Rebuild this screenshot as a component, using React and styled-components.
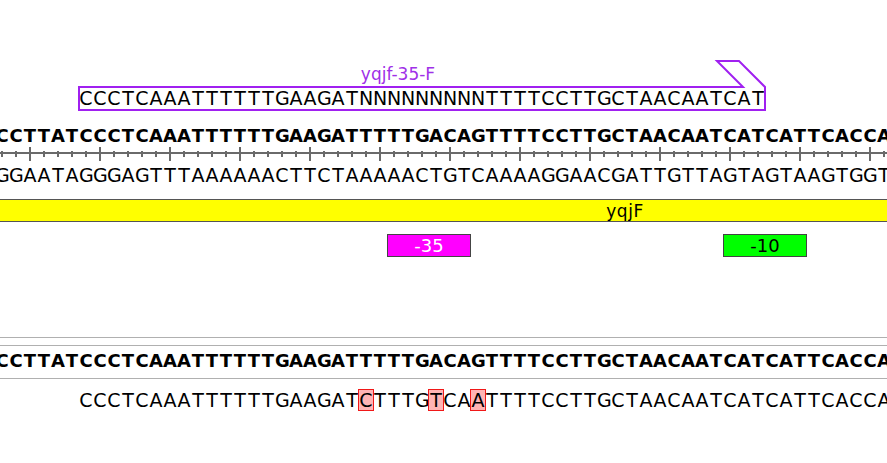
import React from 'react';
import styled, { createGlobalStyle, css } from 'styled-components';

// =============================================
// DATA
// =============================================
const CELL = 14;
const TOP = 'CCTTATCCCTCAAATTTTTTGAAGATTTTTGACAGTTTTCCTTGCTAACAATCATCATTCACCA';
const PAIR = { A: 'T', T: 'A', G: 'C', C: 'G', N: 'N' };
const BOTTOM = TOP.split('').map((b) => PAIR[b]).join('');

const PRIMER = {
  name: 'yqjf-35-F',
  start: 6,
  seq: 'CCCTCAAATTTTTTGAAGATNNNNNNNNNTTTTCCTTGCTAACAATCAT',
};

const FEATURE = { name: 'yqjF', start: 40, len: 10 };

const PROMOTERS = [
  { name: '-35', start: 28, len: 6, bg: '#ff00ff', fg: '#ffffff' },
  { name: '-10', start: 52, len: 6, bg: '#00ff00', fg: '#000000' },
];

const READ = {
  start: 6,
  seq: 'CCCTCAAATTTTTTGAAGATCTTTGTCAATTTTCCTTGCTAACAATCATCATTCACCA',
};

// =============================================
// PARTS
// =============================================
const Bases = ({ seq, refSeq, refStart = 0 }) =>
  seq.split('').map((b, i) => (
    <Base key={i} $mismatch={refSeq && refSeq[refStart + i] !== b}>
      {b}
    </Base>
  ));

const PrimerOutline = () => (
  <Outline width="686" height="25">
    <path
      d="M0 1 H664 L638 -25 H660 L686 1 V24 H0 Z"
      fill="none"
      stroke="#a020f0"
      strokeWidth="2"
      strokeLinejoin="miter"
    />
  </Outline>
);

const App = () => {
  return (
    <>
      <GlobalStyle />
      <Viewer>
        <Canvas>
          <LabelTrack>
            <PrimerName $start={PRIMER.start}>{PRIMER.name}</PrimerName>
          </LabelTrack>

          <LabelTrack $primer>
            <Primer $start={PRIMER.start} $len={PRIMER.seq.length}>
              <PrimerOutline />
              <Bases seq={PRIMER.seq} />
            </Primer>
          </LabelTrack>

          <StrandRow $bold $mt={15}>
            <Bases seq={TOP} />
          </StrandRow>
          <Ruler />
          <StrandRow $mt={4} $h={19}>
            <Bases seq={BOTTOM} />
          </StrandRow>

          <FeatureBar>
            <FeatureName $start={FEATURE.start} $len={FEATURE.len}>
              {FEATURE.name}
            </FeatureName>
          </FeatureBar>

          <PromoterTrack>
            {PROMOTERS.map((p) => (
              <Promoter key={p.name} {...{ $start: p.start, $len: p.len, $bg: p.bg, $fg: p.fg }}>
                {p.name}
              </Promoter>
            ))}
          </PromoterTrack>

          <Divider $mt={80} />
          <Divider $mt={7} />
          <StrandRow $bold $mt={5}>
            <Bases seq={TOP} />
          </StrandRow>
          <Divider $mt={7} />
          <StrandRow $mt={11} $offset={READ.start}>
            <Bases seq={READ.seq} refSeq={TOP} refStart={READ.start} />
          </StrandRow>
        </Canvas>
      </Viewer>
    </>
  );
};

export default App;

// =============================================
// STYLES
// =============================================
const GlobalStyle = createGlobalStyle`
  html, body {
    margin: 0;
    padding: 0;
    background: #ffffff;
    overflow: hidden;
  }
  * {
    box-sizing: border-box;
  }
`;

const Viewer = styled.div`
  width: 887px;
  height: 463px;
  overflow: hidden;
  background: #ffffff;
  font-family: 'DejaVu Sans', Verdana, sans-serif;
  color: #000000;
`;

const Canvas = styled.div`
  margin-left: -5px;
  width: ${64 * CELL}px;
  padding-top: 64px;
`;

const LabelTrack = styled.div`
  display: grid;
  grid-template-columns: repeat(64, ${CELL}px);
  height: ${(p) => (p.$primer ? 25 : 21)}px;
  margin-top: ${(p) => (p.$primer ? 1 : 0)}px;
`;

const PrimerName = styled.div`
  grid-column: ${(p) => p.$start + 1} / span 46;
  padding-right: 6px;
  text-align: center;
  font-size: 17px;
  line-height: 21px;
  color: #a030e8;
  white-space: nowrap;
`;

const Primer = styled.div`
  grid-column: ${(p) => p.$start + 1} / span ${(p) => p.$len};
  position: relative;
  display: flex;
  font-size: 19px;
  line-height: 25px;
`;

const Outline = styled.svg`
  position: absolute;
  left: 0;
  top: 0;
  overflow: visible;
  pointer-events: none;
`;

const StrandRow = styled.div`
  display: flex;
  height: ${(p) => p.$h || 20}px;
  line-height: ${(p) => p.$h || 20}px;
  margin-top: ${(p) => p.$mt || 0}px;
  padding-left: ${(p) => (p.$offset || 0) * CELL}px;
  font-size: ${(p) => (p.$bold ? 18 : 19)}px;
  font-weight: ${(p) => (p.$bold ? 700 : 400)};
  white-space: nowrap;
`;

const Base = styled.span`
  flex: none;
  width: ${CELL}px;
  text-align: center;
  ${(p) =>
    p.$mismatch &&
    css`
      background: #ffb4b4;
      box-shadow: 0 0 0 1px #f01818;
    `}
`;

const Ruler = styled.div`
  height: 16px;
  background:
    linear-gradient(#6a6a6a, #6a6a6a) 0 6px / 100% 2px no-repeat,
    repeating-linear-gradient(
        to right,
        transparent 0 6px,
        #6a6a6a 6px 8px,
        transparent 8px ${CELL}px
      )
      0 5px / 100% 6px no-repeat,
    repeating-linear-gradient(
        to right,
        transparent 0 34px,
        #6a6a6a 34px 36px,
        transparent 36px ${CELL * 5}px
      )
      0 1px / 100% 14px no-repeat;
`;

const FeatureBar = styled.div`
  display: grid;
  grid-template-columns: repeat(64, ${CELL}px);
  height: 23px;
  margin-top: 14px;
  background: #ffff00;
  border-top: 1px solid #555555;
  border-bottom: 1px solid #555555;
`;

const FeatureName = styled.div`
  grid-column: ${(p) => p.$start + 1} / span ${(p) => p.$len};
  text-align: center;
  font-size: 17px;
  letter-spacing: 0.5px;
  padding-top: 2px;
  line-height: 19px;
`;

const PromoterTrack = styled.div`
  display: grid;
  grid-template-columns: repeat(64, ${CELL}px);
  height: 23px;
  margin-top: 12px;
`;

const Promoter = styled.div`
  grid-column: ${(p) => p.$start + 1} / span ${(p) => p.$len};
  background: ${(p) => p.$bg};
  color: ${(p) => p.$fg};
  border: 1px solid #444444;
  font-size: 18px;
  line-height: 21px;
  text-align: center;
`;

const Divider = styled.div`
  height: 1px;
  margin-top: ${(p) => p.$mt || 0}px;
  background: #b0b0b0;
`;
